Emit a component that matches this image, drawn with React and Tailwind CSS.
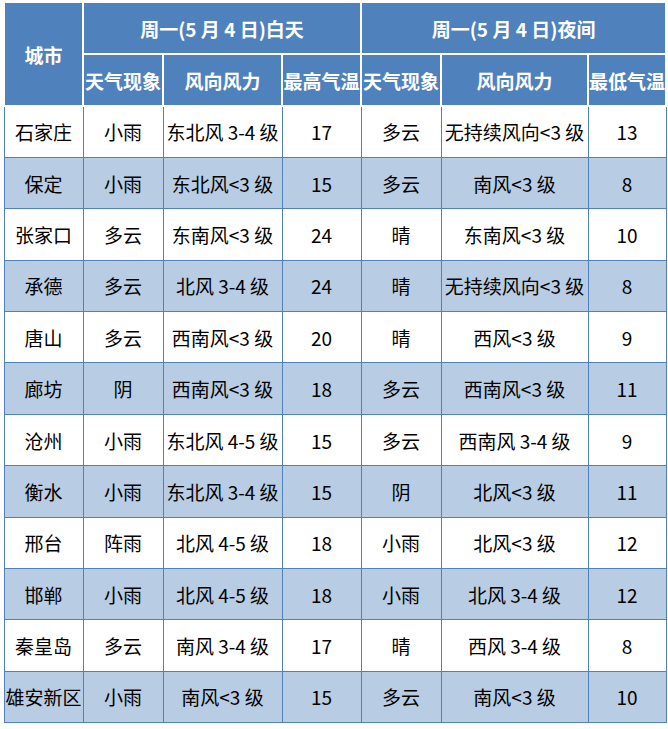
import React from 'react';

const rows = [
    ['石家庄', '小雨', '东北风 3-4 级', '17', '多云', '无持续风向<3 级', '13'],
    ['保定', '小雨', '东北风<3 级', '15', '多云', '南风<3 级', '8'],
    ['张家口', '多云', '东南风<3 级', '24', '晴', '东南风<3 级', '10'],
    ['承德', '多云', '北风 3-4 级', '24', '晴', '无持续风向<3 级', '8'],
    ['唐山', '多云', '西南风<3 级', '20', '晴', '西风<3 级', '9'],
    ['廊坊', '阴', '西南风<3 级', '18', '多云', '西南风<3 级', '11'],
    ['沧州', '小雨', '东北风 4-5 级', '15', '多云', '西南风 3-4 级', '9'],
    ['衡水', '小雨', '东北风 3-4 级', '15', '阴', '北风<3 级', '11'],
    ['邢台', '阵雨', '北风 4-5 级', '18', '小雨', '北风<3 级', '12'],
    ['邯郸', '小雨', '北风 4-5 级', '18', '小雨', '北风 3-4 级', '12'],
    ['秦皇岛', '多云', '南风 3-4 级', '17', '晴', '西风 3-4 级', '8'],
    ['雄安新区', '小雨', '南风<3 级', '15', '多云', '南风<3 级', '10'],
];

const App = () => {
    const th = 'bg-[#4f81bd] text-white font-bold border-2 border-white p-0 whitespace-nowrap overflow-hidden';

    return (
        <div className="bg-white w-[668px] h-[729px] pt-[1px] pl-[3px]">
            <table className="table-fixed border-collapse w-[662px] text-[19px] leading-none text-center font-['Noto_Sans_CJK_SC',sans-serif]">
                <colgroup>
                    <col className="w-[79px]" />
                    <col className="w-[80px]" />
                    <col className="w-[119px]" />
                    <col className="w-[79px]" />
                    <col className="w-[80px]" />
                    <col className="w-[147px]" />
                    <col className="w-[78px]" />
                </colgroup>
                <thead>
                    <tr className="h-[52px]">
                        <th rowSpan={2} className={th}>城市</th>
                        <th colSpan={3} className={th}>周一(5 月 4 日)白天</th>
                        <th colSpan={3} className={th}>周一(5 月 4 日)夜间</th>
                    </tr>
                    <tr className="h-[52px]">
                        <th className={th}>天气现象</th>
                        <th className={th}>风向风力</th>
                        <th className={th}>最高气温</th>
                        <th className={th}>天气现象</th>
                        <th className={th}>风向风力</th>
                        <th className={th}>最低气温</th>
                    </tr>
                </thead>
                <tbody>
                    {rows.map((r, i) => (
                        <tr key={r[0]} className={`h-[51.4px] ${i % 2 === 1 ? 'bg-[#b8cce4]' : 'bg-white'}`}>
                            {r.map((c, j) => (
                                <td key={j} className="border border-[#4f81bd] p-0 whitespace-nowrap overflow-hidden text-black">{c}</td>
                            ))}
                        </tr>
                    ))}
                </tbody>
            </table>
        </div>
    );
};

export default App;
